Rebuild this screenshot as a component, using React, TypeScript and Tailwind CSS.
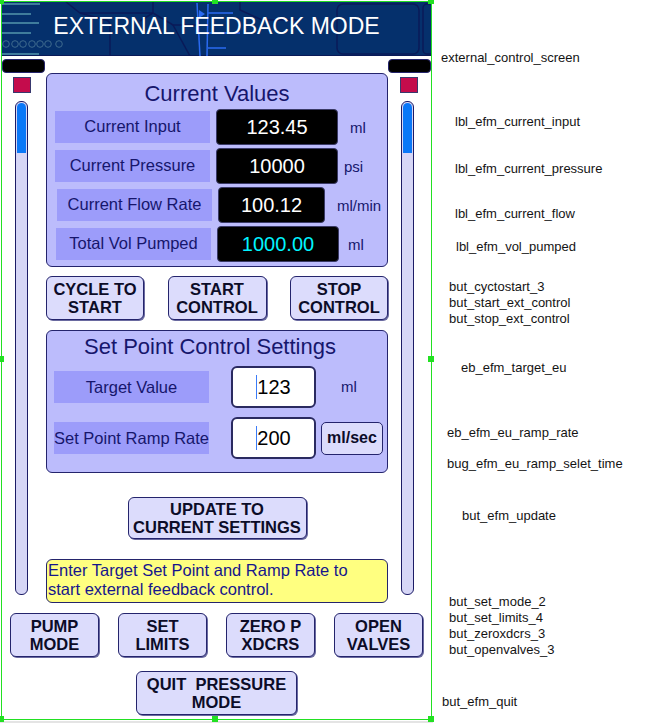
import React from "react";

const navy = "border-[#24246c]";

function HeaderArt() {
    return (
        <svg className="absolute inset-0" width="429" height="54" viewBox="2 2 429 54">
            <g stroke="#3f7c9c" strokeWidth="2" fill="none">
                <line x1="2" y1="4" x2="40" y2="4" />
                <line x1="2" y1="14" x2="31" y2="14" />
                <line x1="2" y1="23" x2="39" y2="23" />
                <line x1="2" y1="33" x2="31" y2="33" />
                <line x1="2" y1="54" x2="39" y2="54" />
            </g>
            <g stroke="#3e6a8e" strokeWidth="1" fill="none">
                {[6, 15, 23, 32, 40, 48, 59].map((cx) => (
                    <circle key={cx} cx={cx} cy="44" r="3.3" />
                ))}
            </g>
            <g stroke="#0a1a58" strokeWidth="1.5" fill="none">
                <path d="M66 2 L80 13 L106 20 Q110 21 110 26 L110 56" />
                <path d="M153 2 L153 13 L140 21" />
                <path d="M80 13 L153 13" />
                <path d="M173 25 L190 56" />
                <path d="M153 13 L173 25 L196 25" />
                <path d="M240 2 L240 10 L262 20 L300 20" />
                <rect x="337" y="4" width="82" height="50" rx="6" />
                <rect x="423" y="4" width="12" height="50" rx="4" />
            </g>
            <g stroke="#2a6af0" strokeWidth="1.5" fill="none">
                <path d="M197 3 L200 56" />
                <path d="M208 4 L207 56" />
                <path d="M208 13 L233 13" />
                <path d="M208 33 L240 33" />
                <path d="M208 48 L226 48" />
            </g>
            <path d="M199 10 L205 14 L199 18 Z" fill="#2a6af0" />
        </svg>
    );
}

function SideRail({ pillW, redMl, trackMl }: { pillW: string; redMl: string; trackMl: string }) {
    return (
        <div className="flex flex-col pt-[3px]">
            <div className={`h-[14px] ${pillW} rounded-[4px] border ${navy} bg-black`} />
            <div className={`mt-[4px] ${redMl} h-[16px] w-[18px] border border-[#38386e] bg-[#c40c4c]`} />
            <div className={`mt-[8px] ${trackMl} h-[494px] w-[13px] rounded-[6px] border border-[#1c1c66] bg-[#d6d6f6] p-[1px]`}>
                <div className="h-[50px] rounded-t-[5px] bg-[#0a78f8]" />
            </div>
        </div>
    );
}

function Btn({ lines, className }: { lines: string[]; className: string }) {
    return (
        <div
            className={`flex flex-col items-center justify-center rounded-[6px] border ${navy} bg-[#dcdcfc] text-[16.5px] font-bold leading-[18.5px] text-[#0c0c28] shadow-[1px_1px_0_#6a6aa0] whitespace-pre ${className}`}
        >
            {lines.map((l) => (
                <span key={l}>{l}</span>
            ))}
        </div>
    );
}

const readings = [
    { label: "Current Input", value: "123.45", unit: "ml", lml: "ml-[8px]", vw: "w-[122px]", uml: "ml-[12px]", color: "text-white" },
    { label: "Current Pressure", value: "10000", unit: "psi", lml: "ml-[8px]", vw: "w-[122px]", uml: "ml-[6px]", color: "text-white" },
    { label: "Current Flow Rate", value: "100.12", unit: "ml/min", lml: "ml-[10px]", vw: "w-[107px]", uml: "ml-[12px]", color: "text-white" },
    { label: "Total Vol Pumped", value: "1000.00", unit: "ml", lml: "ml-[9px]", vw: "w-[122px]", uml: "ml-[9px]", color: "text-[#00f4ff]" },
];

const notes = [
    { t: "external_control_screen", x: "left-[441px]", y: "top-[50px]" },
    { t: "lbl_efm_current_input", x: "left-[455px]", y: "top-[114px]" },
    { t: "lbl_efm_current_pressure", x: "left-[455px]", y: "top-[161px]" },
    { t: "lbl_efm_current_flow", x: "left-[455px]", y: "top-[206px]" },
    { t: "lbl_efm_vol_pumped", x: "left-[456px]", y: "top-[239px]" },
    { t: "but_cyctostart_3", x: "left-[449px]", y: "top-[279px]" },
    { t: "but_start_ext_control", x: "left-[449px]", y: "top-[295px]" },
    { t: "but_stop_ext_control", x: "left-[449px]", y: "top-[311px]" },
    { t: "eb_efm_target_eu", x: "left-[461px]", y: "top-[360px]" },
    { t: "eb_efm_eu_ramp_rate", x: "left-[447px]", y: "top-[425px]" },
    { t: "bug_efm_eu_ramp_selet_time", x: "left-[447px]", y: "top-[456px]" },
    { t: "but_efm_update", x: "left-[462px]", y: "top-[508px]" },
    { t: "but_set_mode_2", x: "left-[449px]", y: "top-[594px]" },
    { t: "but_set_limits_4", x: "left-[449px]", y: "top-[610px]" },
    { t: "but_zeroxdcrs_3", x: "left-[449px]", y: "top-[626px]" },
    { t: "but_openvalves_3", x: "left-[449px]", y: "top-[642px]" },
    { t: "but_efm_quit", x: "left-[442px]", y: "top-[694px]" },
];

const handles = [
    "left-[-2px] top-[-2px]", "left-[212px] top-[-2px]", "left-[428px] top-[-2px]",
    "left-[-2px] top-[356px]", "left-[428px] top-[356px]",
    "left-[-2px] top-[716px]", "left-[212px] top-[716px]", "left-[428px] top-[716px]",
];

export default function App() {
    return (
        <div className="relative h-[723px] w-[672px] overflow-hidden bg-white font-['Liberation_Sans',Arial,sans-serif]">
            <div className="ml-[1px] mt-[1px] h-[719px] w-[431px] border border-[#22e022]">
                <div className="relative flex h-[54px] items-center justify-center border-b border-[#0a1a58] bg-[#05306c] pb-[4px]">
                    <HeaderArt />
                    <span className="relative text-[23px] text-white">EXTERNAL FEEDBACK MODE</span>
                </div>

                <div className="flex">
                    <div className="w-[44px]">
                        <SideRail pillW="w-[43px]" redMl="ml-[11px]" trackMl="ml-[13px]" />
                    </div>

                    <div className="flex w-[342px] flex-col pt-[17px]">
                        <div className={`flex h-[194px] flex-col rounded-[6px] border ${navy} bg-[#bcbcfc] pt-[7px]`}>
                            <div className="text-center text-[22px] leading-[26px] text-[#16166c]">Current Values</div>
                            <div className="mt-[1px] flex flex-col gap-[2px]">
                                {readings.map((r) => (
                                    <div key={r.label} className="flex h-[37px] items-center">
                                        <div className={`${r.lml} flex h-[32px] w-[155px] items-center justify-center bg-[#9c9cfa] text-[16.5px] text-[#16166c]`}>
                                            {r.label}
                                        </div>
                                        <div className={`ml-[6px] flex h-[36px] ${r.vw} items-center justify-center rounded-[4px] border border-[#3a3a66] bg-black text-[20px] ${r.color}`}>
                                            {r.value}
                                        </div>
                                        <span className={`${r.uml} pt-[4px] text-[15px] text-[#16166c]`}>{r.unit}</span>
                                    </div>
                                ))}
                            </div>
                        </div>

                        <div className="mt-[9px] flex justify-between">
                            <Btn lines={["CYCLE TO", "START"]} className="h-[44px] w-[98px]" />
                            <Btn lines={["START", "CONTROL"]} className="h-[44px] w-[99px]" />
                            <Btn lines={["STOP", "CONTROL"]} className="h-[44px] w-[98px]" />
                        </div>

                        <div className={`mt-[10px] flex h-[143px] flex-col rounded-[6px] border ${navy} bg-[#bcbcfc] pt-[3px]`}>
                            <div className="pr-[14px] text-center text-[22px] leading-[26px] text-[#16166c]">Set Point Control Settings</div>
                            <div className="mt-[6px] flex h-[42px] items-center">
                                <div className="ml-[7px] flex h-[32px] w-[155px] items-center justify-center bg-[#9c9cfa] text-[16.5px] text-[#16166c]">
                                    Target Value
                                </div>
                                <div className="ml-[22px] flex h-[42px] w-[85px] items-center justify-center rounded-[6px] border-2 border-[#2a2a60] bg-white text-[20px] text-black">
                                    <span className="h-[24px] w-px bg-[#3c7cf8]" />
                                    123
                                </div>
                                <span className="ml-[25px] text-[15px] text-[#16166c]">ml</span>
                            </div>
                            <div className="mt-[9px] flex h-[42px] items-center">
                                <div className="ml-[7px] flex h-[32px] w-[155px] items-center justify-center bg-[#9c9cfa] text-[16.5px] text-[#16166c]">
                                    Set Point Ramp Rate
                                </div>
                                <div className="ml-[22px] flex h-[42px] w-[85px] items-center justify-center rounded-[6px] border-2 border-[#2a2a60] bg-white text-[20px] text-black">
                                    <span className="h-[24px] w-px bg-[#3c7cf8]" />
                                    200
                                </div>
                                <div className={`ml-[5px] flex h-[33px] w-[62px] items-center justify-center rounded-[5px] border ${navy} bg-[#dcdcfc] text-[16px] font-bold text-[#0c0c28]`}>
                                    ml/sec
                                </div>
                            </div>
                        </div>

                        <div className="mt-[24px] flex justify-center">
                            <Btn lines={["UPDATE TO", "CURRENT SETTINGS"]} className="h-[42px] w-[179px]" />
                        </div>

                        <div className={`mt-[20px] h-[44px] rounded-[6px] border ${navy} bg-[#ffff80] pl-[1px] pt-[1px] text-[16.5px] leading-[18.5px] text-[#16168c]`}>
                            <div>Enter Target Set Point and Ramp Rate to</div>
                            <div>start external feedback control.</div>
                        </div>
                    </div>

                    <div className="w-[43px]">
                        <SideRail pillW="w-[43px]" redMl="ml-[12px]" trackMl="ml-[13px]" />
                    </div>
                </div>

                <div className="mt-[10px] flex gap-[19px] pl-[8px]">
                    <Btn lines={["PUMP", "MODE"]} className="h-[44px] w-[89px]" />
                    <Btn lines={["SET", "LIMITS"]} className="h-[44px] w-[89px]" />
                    <Btn lines={["ZERO P", "XDCRS"]} className="h-[44px] w-[89px]" />
                    <Btn lines={["OPEN", "VALVES"]} className="h-[44px] w-[89px]" />
                </div>

                <div className="mt-[14px] flex justify-center">
                    <Btn lines={["QUIT  PRESSURE", "MODE"]} className="h-[44px] w-[161px]" />
                </div>
            </div>
            <div className="mt-[1px] h-[2px] w-[433px] bg-[#e4e4e4]" />

            {handles.map((h) => (
                <div key={h} className={`absolute h-[6px] w-[6px] bg-[#22e022] ${h}`} />
            ))}

            {notes.map((n) => (
                <div key={n.t} className={`absolute ${n.x} ${n.y} text-[13px] leading-[16px] text-[#141414]`}>
                    {n.t}
                </div>
            ))}
        </div>
    );
}
